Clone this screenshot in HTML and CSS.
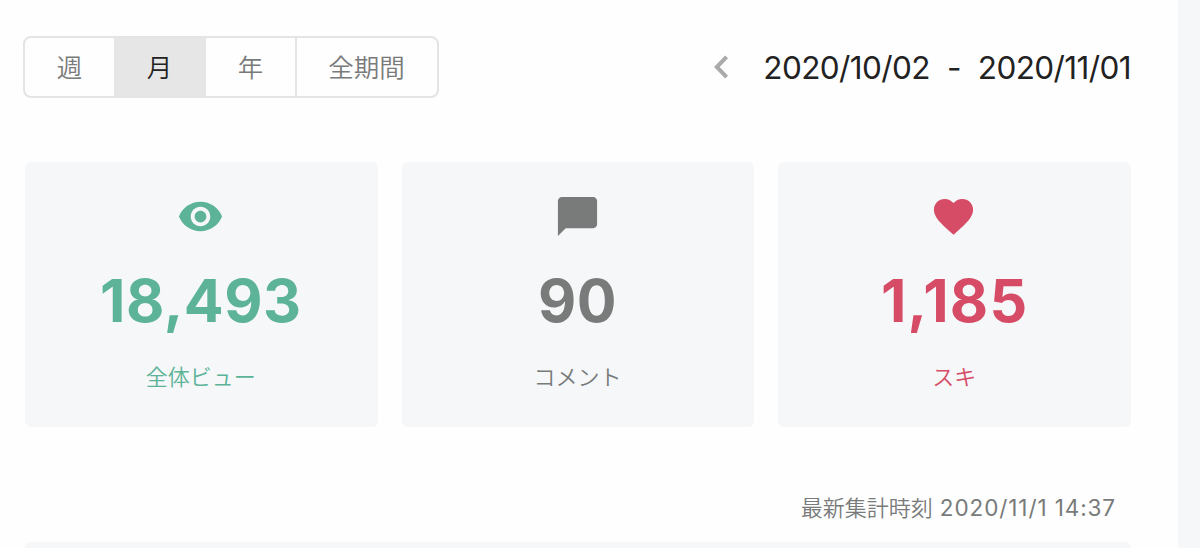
FILE: index.html
```
<!DOCTYPE html>
<html lang="ja">
    <head>
        <meta charset="utf-8">
        <title>ダッシュボード</title>
        <link rel="stylesheet" href="styles.css">
    </head>
    <body>
        <main>
            <header>
                <nav class="tabs">
                    <a class="tab">週</a>
                    <a class="tab active">月</a>
                    <a class="tab">年</a>
                    <a class="tab wide">全期間</a>
                </nav>
                <div class="period">
                    <svg class="prev" viewBox="0 0 16 24"><path d="M13.6 1.9L3.8 12l9.8 10.1"/></svg>
                    <span class="from">2020/10/02</span>
                    <span class="dash">-</span>
                    <span class="to">2020/11/01</span>
                </div>
            </header>

            <section class="cards">
                <div class="card views">
                    <svg class="icon" viewBox="0 0 24 24"><path d="M12 4.5C7 4.5 2.73 7.61 1 12c1.73 4.39 6 7.5 11 7.5s9.27-3.11 11-7.5c-1.73-4.39-6-7.5-11-7.5zM12 17c-2.76 0-5-2.24-5-5s2.24-5 5-5 5 2.24 5 5-2.24 5-5 5zm0-8c-1.66 0-3 1.34-3 3s1.34 3 3 3 3-1.34 3-3-1.34-3-3-3z"/></svg>
                    <p class="count">18,493</p>
                    <p class="label">全体ビュー</p>
                </div>
                <div class="card comments">
                    <svg class="icon" viewBox="0 0 24 24"><path d="M20 2H4c-1.1 0-2 .9-2 2v18l4-4h14c1.1 0 2-.9 2-2V4c0-1.1-.9-2-2-2z"/></svg>
                    <p class="count">90</p>
                    <p class="label">コメント</p>
                </div>
                <div class="card likes">
                    <svg class="icon" viewBox="0 0 24 24"><path d="M12 21.35l-1.45-1.32C5.4 15.36 2 12.28 2 8.5 2 5.42 4.42 3 7.5 3c1.74 0 3.41.81 4.5 2.09C13.09 3.81 14.76 3 16.5 3 19.58 3 22 5.42 22 8.5c0 3.78-3.4 6.86-8.55 11.54L12 21.35z"/></svg>
                    <p class="count">1,185</p>
                    <p class="label">スキ</p>
                </div>
            </section>

            <p class="updated">最新集計時刻 <span class="time">2020/11/1 14:37</span></p>
            <div class="list"></div>
        </main>
    </body>
</html>
```

FILE: styles.css
```
* {
    box-sizing: border-box;
}

body {
    margin: 0;
    height: 548px;
    overflow: hidden;
    background-color: #f5f7f9;
    color: #787b7a;
    font-family: Inter, "Noto Sans CJK JP", sans-serif;
}

p {
    margin: 0;
}

main {
    width: 1178px;
    height: 548px;
    padding: 36px 47px 0 23px;
    background-color: #fefefe;
    overflow: hidden;
}

header {
    display: flex;
    justify-content: space-between;
    height: 62px;
}

.tabs {
    display: flex;
    width: 416px;
    height: 62px;
    border: 2px solid #e3e4e4;
    border-radius: 8px;
    overflow: hidden;
}

.tab {
    width: 90px;
    padding-right: 1px;
    line-height: 60px;
    text-align: center;
    font-size: 25.5px;
    font-weight: 350;
}

.tab.active {
    width: 92px;
    margin-left: -1px;
    background-color: #e6e6e6;
    color: #222;
}

.tab.wide {
    flex: 1;
    margin-left: -1px;
    border-left: 2px solid #e3e4e4;
}

.period {
    display: flex;
    align-items: center;
    color: #222;
    font-size: 31.5px;
    font-weight: 380;
    letter-spacing: -0.6px;
    line-height: 64px;
}

.period span {
    padding-top: 2px;
}

.prev {
    width: 16px;
    height: 24px;
    margin-right: 34px;
    fill: none;
    stroke: #aaa;
    stroke-width: 4;
}

.period .dash {
    margin: 0 17px;
}

.cards {
    display: flex;
    gap: 24px;
    margin: 64px 0 0 2px;
}

.card {
    flex: 1;
    display: flex;
    flex-direction: column;
    align-items: center;
    height: 265px;
    padding: 31px 2px 0 0;
    border-radius: 6px;
    background-color: #f5f7f9;
}

.icon {
    width: 47px;
    height: 47px;
    fill: currentColor;
}

.count {
    margin-top: 25px;
    padding-left: 1px;
    font-size: 59px;
    font-weight: 700;
    letter-spacing: 0.5px;
    line-height: 72px;
}

.label {
    margin-top: 23px;
    padding-left: 1px;
    font-size: 22px;
    font-weight: 350;
    line-height: 34px;
}

.views {
    color: #5cb397;
}

.comments {
    color: #787b7a;
}

.likes {
    color: #d64c66;
}

.likes .count {
    padding-left: 2px;
    letter-spacing: 1.2px;
}

.updated {
    margin: 64px 15px 0 0;
    text-align: right;
    font-size: 22px;
    font-weight: 350;
    line-height: 34px;
}

.time {
    margin-left: 1px;
    font-size: 22.5px;
    font-weight: 380;
    letter-spacing: 0.9px;
}

.list {
    height: 20px;
    margin: 17px 0 0 2px;
    border-radius: 6px;
    background-color: #f5f7f9;
}
```
